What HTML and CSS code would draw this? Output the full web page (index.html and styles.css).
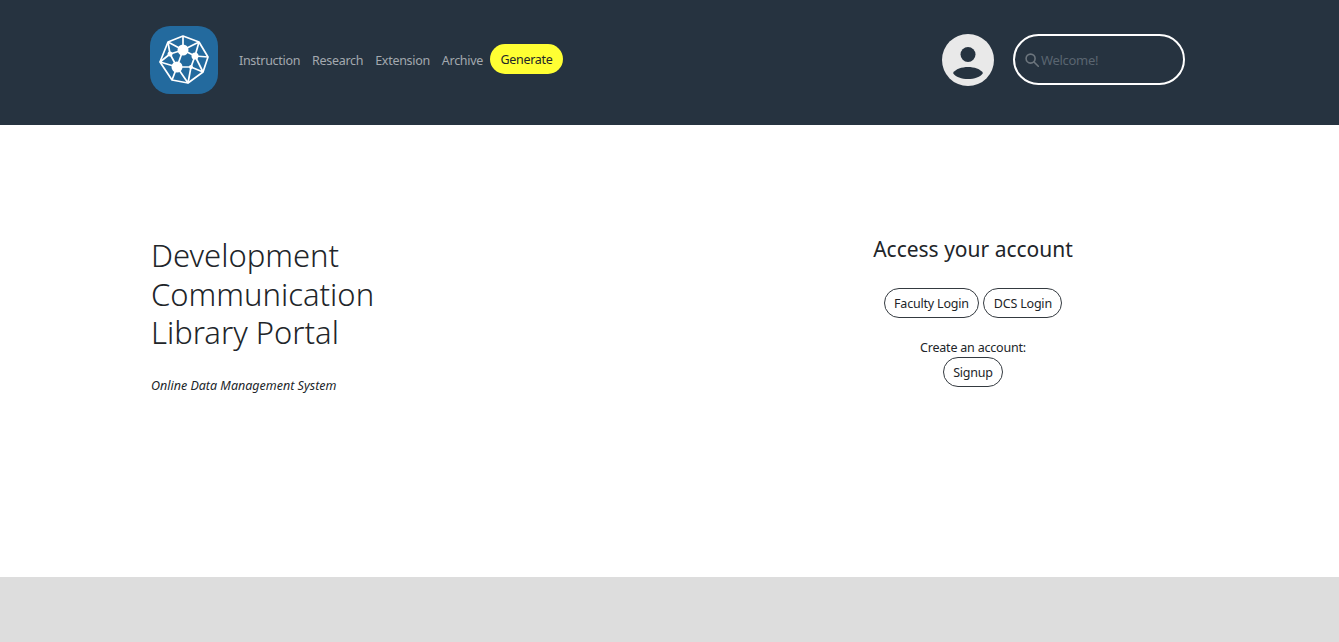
FILE: index.html
```html
<!DOCTYPE html>
<html lang="en">
<head>
    <meta charset="UTF-8">
    <meta name="viewport" content="width=device-width, initial-scale=1.0">
    <title>Development Communication Library Portal</title>
    <link rel="stylesheet" href="styles.css">
</head>
<body>
<header class="topbar">
    <div class="topbar-inner">
        <div class="brand-nav">
            <a class="logo" href="#">
                <svg width="68" height="68" viewBox="0 0 68 68">
                    <rect width="68" height="68" rx="20" fill="#236a9e"/>
                    <g fill="none" stroke="#fff" stroke-width="1.7" stroke-linejoin="round">
                        <polygon points="33,10 49,16 58,31 53,46 38,57 22,54 10,36 18,16"/>
                        <path d="M33 10L33 24M18 16L33 24M49 16L33 24M49 16L45 30M58 31L45 30M53 46L45 30M53 46L41 41M38 57L41 41M38 57L27 41M22 54L27 41M10 36L27 41M10 36L20 28M18 16L20 28M20 28L33 24M20 28L27 41M33 24L27 41M33 24L45 30M45 30L41 41M27 41L41 41"/>
                    </g>
                    <g fill="#fff">
                        <circle cx="33" cy="24" r="5.5"/>
                        <circle cx="45" cy="30" r="3.5"/>
                        <circle cx="27" cy="41" r="5.5"/>
                        <circle cx="20" cy="28" r="2.5"/>
                        <circle cx="41" cy="41" r="2"/>
                    </g>
                </svg>
            </a>
            <nav class="nav">
                <a href="#">Instruction</a>
                <a href="#">Research</a>
                <a href="#">Extension</a>
                <a href="#">Archive</a>
            </nav>
            <a class="generate" href="#">Generate</a>
        </div>
        <div class="user-area">
            <div class="avatar">
                <svg width="52" height="52" viewBox="0 0 52 52">
                    <circle cx="26" cy="26" r="26" fill="#e9e9e9"/>
                    <circle cx="26" cy="20.5" r="7.5" fill="#263340"/>
                    <path d="M11 39C16 31 36 31 41 39C36 47 16 47 11 39Z" fill="#263340"/>
                </svg>
            </div>
            <div class="search">
                <svg width="14" height="14" viewBox="0 0 14 14" fill="none" stroke="#6c757d" stroke-width="1.6">
                    <circle cx="5.6" cy="5.6" r="4.5"/>
                    <path d="M9 9l4.3 4.3" stroke-linecap="round"/>
                </svg>
                <span>Welcome!</span>
            </div>
        </div>
    </div>
</header>

<main class="content">
    <section class="intro">
        <h1>Development<br>Communication<br>Library Portal</h1>
        <p class="tagline">Online Data Management System</p>
    </section>
    <section class="account">
        <h2>Access your account</h2>
        <div class="login-row">
            <a class="pill" href="#">Faculty Login</a>
            <a class="pill" href="#">DCS Login</a>
        </div>
        <p class="create">Create an account:</p>
        <a class="pill" href="#">Signup</a>
    </section>
</main>

<footer class="footer"></footer>
</body>
</html>
```

FILE: styles.css
```css
* {
    box-sizing: border-box;
}
html, body {
    height: 100%;
}
body {
    margin: 0;
    font-family: 'Noto Sans', 'Open Sans', sans-serif;
    background: #fff;
    color: #212529;
    display: flex;
    flex-direction: column;
    overflow: hidden;
}
a {
    text-decoration: none;
}
.topbar {
    height: 125px;
    background: #263340;
    flex-shrink: 0;
}
.topbar-inner {
    width: 1035px;
    height: 100%;
    margin-left: 150px;
    padding-bottom: 6px;
    display: flex;
    justify-content: space-between;
    align-items: center;
}
.brand-nav {
    display: flex;
    align-items: center;
}
.logo {
    display: block;
    width: 68px;
    height: 68px;
    margin-right: 21px;
}
.nav {
    display: flex;
    gap: 12px;
    font-size: 12.5px;
    letter-spacing: -0.3px;
    margin-top: 1px;
}
.nav a {
    color: #a3a9af;
}
.generate {
    margin: 0 0 2px 7px;
    height: 30px;
    padding: 2px 10.5px 0;
    display: flex;
    align-items: center;
    background: #ffff33;
    color: #212529;
    border-radius: 15px;
    font-size: 12.5px;
    letter-spacing: -0.3px;
}
.user-area {
    display: flex;
    align-items: center;
    gap: 19px;
}
.avatar {
    width: 52px;
    height: 52px;
}
.avatar svg {
    display: block;
}
.search {
    width: 172px;
    height: 51px;
    border: 2px solid #fff;
    border-radius: 26px;
    padding-left: 10px;
    display: flex;
    align-items: center;
    gap: 2px;
    color: #5a6570;
    font-size: 13px;
    letter-spacing: -0.3px;
}
.content {
    flex: 1;
    display: flex;
    padding-left: 151px;
}
.intro {
    width: 600px;
    padding-top: 111px;
}
.intro h1 {
    margin: 0;
    font-size: 31px;
    font-weight: 300;
    line-height: 38.5px;
}
.tagline {
    margin: 25px 0 0;
    font-size: 12.5px;
    font-style: italic;
    line-height: 18px;
}
.account {
    width: 444px;
    padding-top: 109px;
    text-align: center;
}
.account h2 {
    margin: 0;
    font-size: 21px;
    font-weight: 400;
    line-height: 30px;
}
.login-row {
    margin-top: 24px;
    display: flex;
    justify-content: center;
    gap: 4px;
}
.pill {
    display: inline-block;
    height: 30px;
    line-height: 30px;
    padding: 0 9.5px;
    border: 1px solid #343a40;
    border-radius: 15px;
    color: #212529;
    font-size: 12.5px;
    letter-spacing: -0.2px;
}
.create {
    margin: 21px 0 0;
    font-size: 12.5px;
    letter-spacing: -0.2px;
    line-height: 18px;
    color: #212529;
}
.footer {
    height: 65px;
    background: #ddd;
    flex-shrink: 0;
}
```
